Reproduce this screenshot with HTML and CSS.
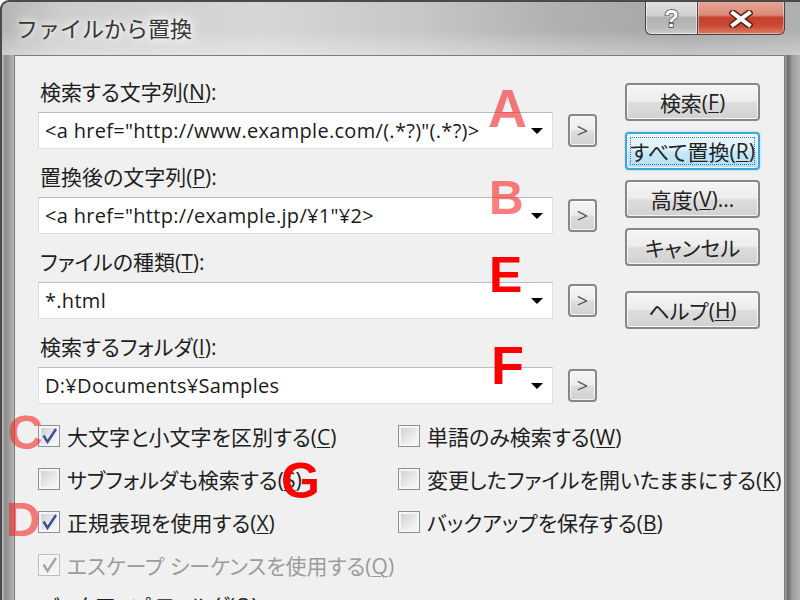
FILE: index.html
```html
<!DOCTYPE html>
<html lang="ja">
<head>
<meta charset="utf-8">
<title>ファイルから置換</title>
<link rel="stylesheet" href="styles.css">
</head>
<body>
<div class="window">
  <div class="titlebar">
    <div class="title">ファイルから置換</div>
    <div class="caption">
      <div class="cap-btn cap-help"><span class="qmark">?</span></div>
      <div class="cap-btn cap-close">
        <svg width="24" height="18" viewBox="0 0 24 18"><path d="M4 3 L20 15 M20 3 L4 15" fill="none" stroke="#5b1e14" stroke-width="7" stroke-linecap="square"/><path d="M4 3 L20 15 M20 3 L4 15" fill="none" stroke="#ffffff" stroke-width="4" stroke-linecap="square"/></svg>
      </div>
    </div>
  </div>
  <div class="frame">
    <div class="client">
      <div class="top">
        <div class="fields">
          <div class="field">
            <div class="label">検索する文字列(<u>N</u>):</div>
            <div class="combo-row">
              <div class="combo"><span class="combo-text">&lt;a href="http://www.example.com/(.*?)"(.*?)&gt;</span><span class="arrow"></span></div>
              <div class="btn small">&gt;</div>
            </div>
          </div>
          <div class="field">
            <div class="label">置換後の文字列(<u>P</u>):</div>
            <div class="combo-row">
              <div class="combo"><span class="combo-text">&lt;a href="http://example.jp/¥1"¥2&gt;</span><span class="arrow"></span></div>
              <div class="btn small">&gt;</div>
            </div>
          </div>
          <div class="field">
            <div class="label">ファイルの種類(<u>T</u>):</div>
            <div class="combo-row">
              <div class="combo"><span class="combo-text">*.html</span><span class="arrow"></span></div>
              <div class="btn small">&gt;</div>
            </div>
          </div>
          <div class="field">
            <div class="label">検索するフォルダ(<u>I</u>):</div>
            <div class="combo-row">
              <div class="combo"><span class="combo-text">D:¥Documents¥Samples</span><span class="arrow"></span></div>
              <div class="btn small">&gt;</div>
            </div>
          </div>
        </div>
        <div class="buttons">
          <div class="btn big b1">検索(<u>F</u>)</div>
          <div class="btn big b2 default">すべて置換(<u>R</u>)</div>
          <div class="btn big b3">高度(<u>V</u>)...</div>
          <div class="btn big b4">キャンセル</div>
          <div class="btn big b5">ヘルプ(<u>H</u>)</div>
        </div>
      </div>
      <div class="options">
        <div class="opt"><span class="cb"><svg width="20" height="20" viewBox="0 0 20 20"><path d="M4.5 9.5 L8.5 16 L17 3" fill="none" stroke="#3b4f99" stroke-width="2.4"/></svg></span><span>大文字と小文字を区別する(<u>C</u>)</span></div>
        <div class="opt"><span class="cb"></span><span>単語のみ検索する(<u>W</u>)</span></div>
        <div class="opt"><span class="cb"></span><span>サブフォルダも検索する(<u>S</u>)</span></div>
        <div class="opt"><span class="cb"></span><span>変更したファイルを開いたままにする(<u>K</u>)</span></div>
        <div class="opt"><span class="cb"><svg width="20" height="20" viewBox="0 0 20 20"><path d="M4.5 9.5 L8.5 16 L17 3" fill="none" stroke="#3b4f99" stroke-width="2.4"/></svg></span><span>正規表現を使用する(<u>X</u>)</span></div>
        <div class="opt"><span class="cb"></span><span>バックアップを保存する(<u>B</u>)</span></div>
        <div class="opt disabled"><span class="cb"><svg width="20" height="20" viewBox="0 0 20 20"><path d="M4.5 9.5 L8.5 16 L17 3" fill="none" stroke="#a6a6a6" stroke-width="2.4"/></svg></span><span>エスケープ シーケンスを使用する(<u>Q</u>)</span></div>
      </div>
      <div class="label folder-label">バックアップ フォルダ(<u>O</u>):</div>
    </div>
  </div>
  <span class="mark soft mark-a">A</span>
  <span class="mark soft mark-b">B</span>
  <span class="mark hard mark-e">E</span>
  <span class="mark hard mark-f">F</span>
  <span class="mark hard mark-g">G</span>
  <span class="mark soft mark-c">C</span>
  <span class="mark soft mark-d">D</span>
</div>
</body>
</html>
```
FILE: styles.css
```css
* { box-sizing: border-box; }
html, body { margin: 0; padding: 0; }
body {
  width: 800px;
  height: 600px;
  overflow: hidden;
  background: #ffffff;
  font-family: "Open Sans", "Noto Sans CJK JP", sans-serif;
  color: #1e1e1e;
}
u { text-decoration-thickness: 1px; text-underline-offset: 2px; }

.window {
  position: relative;
  width: 800px;
  height: 600px;
  display: flex;
  flex-direction: column;
  border-top: 2px solid #4a4a4a;
  border-left: 2px solid #4a4a4a;
  border-top-left-radius: 9px;
  overflow: hidden;
  background:
    linear-gradient(to bottom, rgba(255,255,255,0) 0, rgba(255,255,255,0) 28px, rgba(255,255,255,.35) 53px, rgba(255,255,255,0) 80px),
    linear-gradient(to right, #b5b5b5 0, #cdcdcd 60px, #d6d6d6 260px, #c6c6c6 420px, #b0b0b0 560px, #a6a6a6 680px, #b0b0b0 800px);
}

/* title bar */
.titlebar {
  flex: none;
  height: 53px;
  display: flex;
  align-items: flex-start;
  padding: 0 15px 0 14px;
}
.title {
  margin-top: 10px;
  font-family: "Noto Sans CJK JP", sans-serif;
  font-size: 22px;
  line-height: 30px;
  color: #363636;
  text-shadow: 0 0 6px #fff, 0 0 12px #fff, 0 0 20px rgba(255,255,255,.9);
}
.caption {
  margin-left: auto;
  margin-top: -2px;
  display: flex;
  height: 35px;
}
.cap-btn {
  height: 35px;
  border: 1px solid #454545;
  border-top: none;
  display: flex;
  align-items: center;
  justify-content: center;
}
.cap-help {
  width: 52px;
  border-right: none;
  border-radius: 0 0 0 6px;
  background: linear-gradient(to bottom, #e2e2e2 0%, #d0d0d0 45%, #b1b1b1 52%, #b9b9b9 80%, #cdcdcd 100%);
  box-shadow: inset 0 0 0 1px rgba(255,255,255,.55);
}
.qmark {
  font-family: "Liberation Sans", sans-serif;
  font-weight: bold;
  font-size: 24px;
  line-height: 24px;
  color: #ffffff;
  -webkit-text-stroke: 1.4px #3c3c3c;
  paint-order: stroke fill;
  margin-top: 3px;
}
.cap-close {
  width: 88px;
  border-radius: 0 0 6px 0;
  background: linear-gradient(to bottom, #e9ab9d 0%, #db8a78 44%, #c5402a 52%, #c94a33 75%, #de7d67 100%);
  box-shadow: inset 0 0 0 1px rgba(255,255,255,.4);
}
.cap-close svg { margin-top: 3px; }

/* frame + client */
.frame {
  flex: 1;
  display: flex;
  padding: 0 15px 0 12px;
  background:
    linear-gradient(to right, #c2c2c2 0, #8e8e8e 3px, #9c9c9c 7px, #b6b6b6 12px) left top / 12px 100% no-repeat,
    linear-gradient(to right, #a8a8a8 0, #6c6c6c 3px, #9a9a9a 7px, #b4b4b4 15px) right top / 15px 100% no-repeat;
}
.client {
  flex: 1;
  background: #f0f0f0;
  border: 1px solid #7c7c7c;
  border-bottom: none;
  padding: 22px 0 0 23px;
}

.top { display: flex; }
.fields { width: 559px; }
.field + .field { margin-top: 14px; }

.label {
  height: 28px;
  line-height: 28px;
  font-size: 21px;
  font-feature-settings: "palt";
  padding-left: 2px;
  margin-bottom: 6px;
  white-space: nowrap;
}
.combo-row {
  display: flex;
  align-items: center;
  height: 37px;
}
.combo {
  width: 515px;
  height: 37px;
  flex: none;
  display: flex;
  align-items: center;
  padding-left: 6px;
  background: #ffffff;
  border: 1px solid #dcdee2;
  border-top-color: #b8bbc1;
}
.combo-text {
  flex: 1;
  font-size: 20px;
  letter-spacing: .3px;
  white-space: nowrap;
  color: #1a1a1a;
}
.arrow {
  width: 0;
  height: 0;
  border-left: 6px solid transparent;
  border-right: 6px solid transparent;
  border-top: 6px solid #000;
  margin-right: 9px;
}

.btn {
  display: flex;
  align-items: center;
  justify-content: center;
  border: 2px solid #878787;
  border-radius: 4px;
  background: linear-gradient(#f5f5f5 0%, #ececec 48%, #dddddd 52%, #d1d1d1 100%);
  box-shadow: inset 0 0 0 1px rgba(255,255,255,.75);
  font-size: 21px;
  font-feature-settings: "palt";
  color: #222;
  white-space: nowrap;
}
.btn.small {
  width: 29px;
  height: 33px;
  margin-left: 15px;
  flex: none;
  font-size: 20px;
  color: #555;
}
.buttons {
  width: 135px;
  margin-left: 28px;
  padding-top: 5px;
  display: flex;
  flex-direction: column;
}
.btn.big { height: 38px; }
.b2 { margin-top: 11px; }
.b3 { margin-top: 10px; }
.b4 { margin-top: 10px; }
.b5 { margin-top: 25px; }
.btn.default {
  position: relative;
  border-color: #3aa6dc;
  background: linear-gradient(#ecf7fd 0%, #dcf0fb 48%, #c6e8fa 52%, #b4dff5 100%);
  box-shadow: inset 0 0 0 1px rgba(255,255,255,.7), 0 0 2px rgba(60,170,230,.6);
}
.btn.default::after {
  content: "";
  position: absolute;
  top: 3px; left: 3px; right: 3px; bottom: 3px;
  border: 1px dotted #4a6f8f;
}

/* options */
.options {
  margin-top: 10px;
  display: grid;
  grid-template-columns: 360px 1fr;
  grid-auto-rows: 43px;
}
.opt {
  display: flex;
  align-items: center;
  gap: 7px;
  font-size: 21px;
  font-feature-settings: "palt";
  white-space: nowrap;
}
.cb {
  flex: none;
  width: 22px;
  height: 22px;
  border: 1px solid #8e8f8f;
  background: linear-gradient(135deg, #c8ccd1 0%, #e9e9ea 55%, #fbfbfb 100%);
  box-shadow: inset 0 0 0 2px #f6f6f6;
  display: flex;
  align-items: center;
  justify-content: center;
}
.opt.disabled { color: #9b9b9b; }
.opt.disabled .cb { border-color: #bdbdbd; background: #f3f3f3; }

.folder-label { margin-top: 6px; }

/* annotation letters */
.mark {
  position: absolute;
  font-family: "Liberation Sans", Arial, sans-serif;
  font-weight: bold;
  line-height: 1;
}
.soft { color: rgba(246, 40, 40, .62); }
.hard { color: #ff0000; }
.mark-a { font-size: 54px; left: 486px; top: 79px; }
.mark-b { font-size: 48px; left: 487px; top: 172px; }
.mark-e { font-size: 50px; left: 487px; top: 248px; }
.mark-f { font-size: 54px; left: 489px; top: 336px; }
.mark-g { font-size: 50px; left: 279px; top: 454px; }
.mark-c { font-size: 48px; left: 6px; top: 407px; }
.mark-d { font-size: 48px; left: 4px; top: 494px; }
```
